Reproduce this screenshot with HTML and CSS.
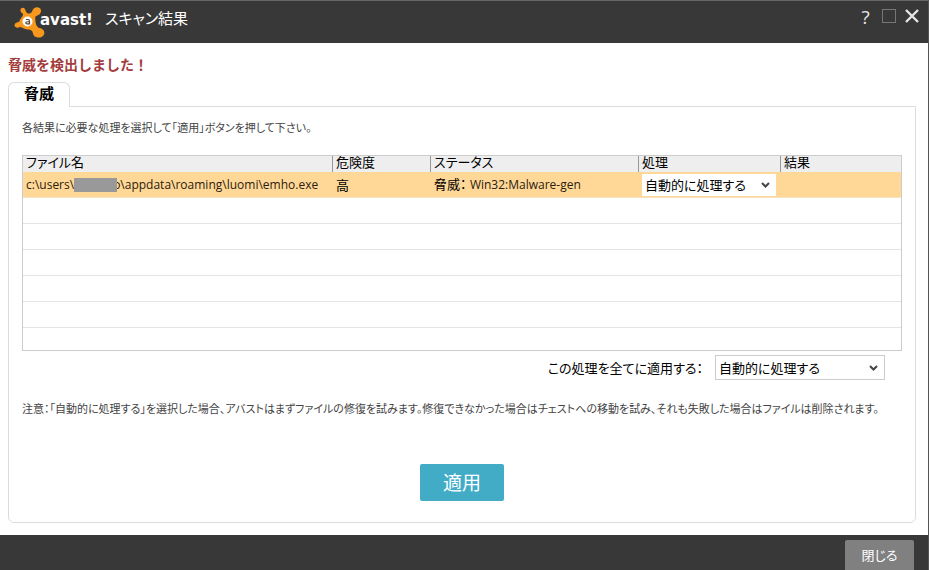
FILE: index.html
```html
<!DOCTYPE html>
<html lang="ja">
<head>
  <meta charset="UTF-8">
  <title>スキャン結果</title>
  <link rel="stylesheet" href="styles.css">
</head>
<body>

  <header class="titlebar">
    <svg class="logo" width="32" height="34" viewBox="0 0 32 34" aria-hidden="true">
      <path fill="#f7981d" d="M6.500 6 C6 3 9 2 10.500 3.500 C12 5 11.500 8 14.500 8.500 C18 8.500 18 6 19 4.500 C21 1.500 26 1.500 27 5 C27.500 8.500 24.500 10.500 22 11 C20.500 12.500 21.500 14 21.500 17 C22 20 23 22 25 23 C30 23.500 32 28 29 31 C25.500 34 19.500 32.500 19 28.500 C18.500 25.500 17 24.500 13.500 24.500 C10 24.500 8.500 22 6 22 C3.500 23.500 0.500 22.500 0.500 20 C1 17.500 3.500 17.500 5.500 16.500 C6 13.500 9 11.500 9 9.500 C9 8 7 8 6.500 6 Z"/>
      <circle cx="13.500" cy="16.500" r="5" fill="#fff"/>
      <path d="M12 14.500 H14 Q15.500 14.500 15.500 16 V18.800 H13 Q11.300 18.500 12 17.200 Q12.500 16.600 15.500 16.800" fill="none" stroke="#5a4630" stroke-width="1.200"/>
    </svg>
    <span class="brand">avast!</span>
    <h1 class="title">スキャン結果</h1>
    <div class="window-buttons">
      <button type="button" class="window-button" aria-label="ヘルプ">?</button>
      <button type="button" class="window-button" aria-label="最大化">
        <svg width="16" height="16" viewBox="0 0 16 16"><rect x="1.5" y="1.5" width="13" height="13" fill="none" stroke="#777"/></svg>
      </button>
      <button type="button" class="window-button" aria-label="ウィンドウを閉じる">
        <svg width="16" height="16" viewBox="0 0 16 16"><path d="M2 2 L14 14 M14 2 L2 14" stroke="#e6e6e6" stroke-width="2.4"/></svg>
      </button>
    </div>
  </header>

  <main class="content">
    <h2 class="alert">脅威を検出しました！</h2>
    <div class="tabs">
      <button type="button" class="tab">脅威</button>
    </div>
    <section class="panel">
      <p class="note">各結果に必要な処理を選択して「適用」ボタンを押して下さい。</p>

      <table class="results">
        <colgroup>
          <col class="col-file">
          <col class="col-level">
          <col class="col-status">
          <col class="col-action">
          <col class="col-result">
        </colgroup>
        <thead>
          <tr>
            <th>ファイル名</th>
            <th>危険度</th>
            <th>ステータス</th>
            <th>処理</th>
            <th>結果</th>
          </tr>
        </thead>
        <tbody>
          <tr class="threat">
            <td class="path">c:\users\<span class="masked"></span>o\appdata\roaming\luomi\emho.exe</td>
            <td>高</td>
            <td>脅威： <span class="path">Win32:Malware-gen</span></td>
            <td>
              <select class="select" aria-label="処理">
                <option>自動的に処理する</option>
              </select>
            </td>
            <td></td>
          </tr>
          <tr><td colspan="5"></td></tr>
          <tr><td colspan="5"></td></tr>
          <tr><td colspan="5"></td></tr>
          <tr><td colspan="5"></td></tr>
          <tr><td colspan="5"></td></tr>
          <tr class="last"><td colspan="5"></td></tr>
        </tbody>
      </table>

      <div class="apply-all">
        <label for="all-action">この処理を全てに適用する：</label>
        <select id="all-action" class="select select-wide">
          <option>自動的に処理する</option>
        </select>
      </div>

      <p class="note">注意：「自動的に処理する」を選択した場合、アバストはまずファイルの修復を試みます。修復できなかった場合はチェストへの移動を試み、それも失敗した場合はファイルは削除されます。</p>

      <button type="button" class="apply">適用</button>
    </section>
  </main>

  <footer class="footer">
    <button type="button" class="close">閉じる</button>
  </footer>

</body>
</html>
```

FILE: styles.css
```css
* {
  box-sizing: border-box;
}

body {
  margin: 0;
  min-height: 100vh;
  display: flex;
  flex-direction: column;
  background: #fff;
  border-right: 1px solid #555;
  color: #000;
  font-family: "Open Sans", "Noto Sans CJK JP", sans-serif;
  font-size: 13px;
  line-height: 16px;
  font-feature-settings: "palt";
}

h1, h2, p {
  margin: 0;
}

button, select {
  font: inherit;
  font-feature-settings: inherit;
  color: inherit;
}

/* title bar */
.titlebar {
  display: flex;
  align-items: center;
  height: 43px;
  padding: 0 8px 0 14px;
  background: #383838;
  border-top: 1px solid #666;
  color: #fff;
}

.brand {
  margin-left: -6px;
  padding-bottom: 4px;
  font-family: "DejaVu Sans", sans-serif;
  font-size: 15px;
  font-weight: bold;
}

.title {
  margin-left: 12px;
  padding-bottom: 8px;
  font-size: 15px;
  font-weight: normal;
  white-space: nowrap;
}

.window-buttons {
  display: flex;
  gap: 6px;
  margin-left: auto;
  padding-bottom: 10px;
}

.window-button {
  width: 17px;
  height: 18px;
  padding: 0;
  background: none;
  border: 0;
  color: #e6e6e6;
  font-size: 19px;
  line-height: 18px;
}

.content {
  flex: 1;
  display: flex;
  flex-direction: column;
  padding: 13px 12px 12px 8px;
}

.alert {
  color: #a33c3c;
  font-size: 14px;
  line-height: 18px;
  font-feature-settings: normal;
}

.tabs {
  display: flex;
  margin-top: 8px;
}

.tab {
  position: relative;
  width: 62px;
  height: 25px;
  padding: 0 0 4px;
  background: #fff;
  border: 1px solid #dcdcdc;
  border-bottom: 0;
  border-radius: 6px 6px 0 0;
  font-size: 15px;
  font-weight: bold;
}

.panel {
  flex: 1;
  margin-top: -1px;
  padding: 13px 13px 21px;
  border: 1px solid #dcdcdc;
  border-radius: 0 0 6px 6px;
}

.note {
  color: #444;
  font-size: 11px;
}

.results {
  width: 100%;
  margin-top: 19px;
  table-layout: fixed;
  border-collapse: separate;
  border-spacing: 0;
  border: 1px solid #ccc;
}

.col-file { width: 310px; }
.col-level { width: 98px; }
.col-status { width: 208px; }
.col-action { width: 142px; }

.results th {
  height: 16px;
  padding: 0 3px 3px;
  background: #eee;
  border-right: 1px solid #999;
  font-weight: normal;
  line-height: 13px;
  text-align: left;
}

.results th:last-child {
  border-right: 0;
}

.results td {
  height: 26px;
  padding: 0 3px;
  border-bottom: 1px solid #e4e4e4;
  white-space: nowrap;
}

.results .threat td {
  background: #ffd898;
  border-bottom-color: #f4e2c2;
}

.results .last td {
  height: 22px;
  border-bottom: 0;
}

.results .path {
  color: #2c200c;
  font-size: 12px;
}

/* covers the user name */
.masked {
  position: relative;
  display: inline-block;
  width: 43px;
  height: 14px;
  margin-right: -4px;
  background: #999;
  vertical-align: middle;
}

.select {
  display: block;
  width: 134px;
  height: 22px;
  padding: 0 3px;
  appearance: none;
  background: #fff url("data:image/svg+xml,%3Csvg xmlns='http://www.w3.org/2000/svg' width='9' height='6'%3E%3Cpath d='M1 1 L4.5 4.5 L8 1' fill='none' stroke='%23444' stroke-width='2'/%3E%3C/svg%3E") no-repeat right 6px center;
  border: 0;
  border-radius: 0;
}

.select-wide {
  width: 170px;
  height: 25px;
  border: 1px solid #ccc;
}

.apply-all {
  display: flex;
  justify-content: flex-end;
  align-items: center;
  gap: 12px;
  margin: 4px 17px 21px 0;
}

.apply {
  display: block;
  width: 84px;
  height: 37px;
  margin: 47px auto 0;
  padding: 0;
  background: #42abc5;
  border: 0;
  border-radius: 2px;
  color: #fff;
  font-size: 19px;
}

.footer {
  display: flex;
  justify-content: flex-end;
  height: 35px;
  padding: 5px 14px 0 0;
  background: #383838;
}

.close {
  width: 69px;
  height: 30px;
  padding: 0;
  background: #808080;
  border: 0;
  border-radius: 2px 2px 0 0;
  color: #fff;
  font-size: 13px;
}
```
